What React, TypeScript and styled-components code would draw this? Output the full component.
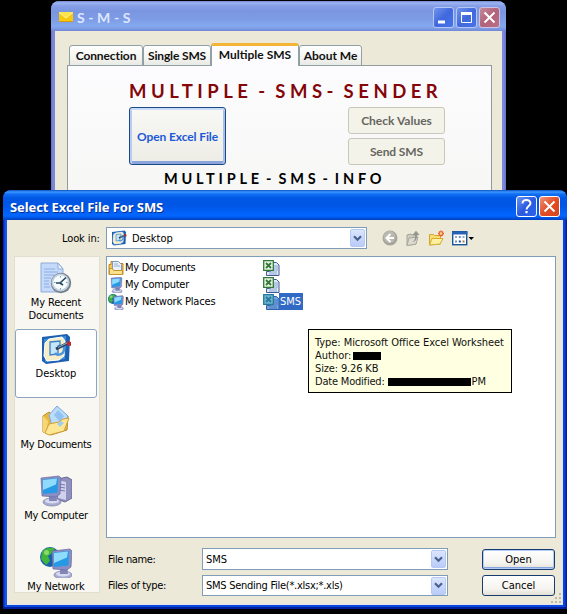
import React from "react";
import styled, { createGlobalStyle, css } from "styled-components";

const Global = createGlobalStyle`
  html, body { margin: 0; padding: 0; background: #000; overflow: hidden; }
  *, *::before, *::after { box-sizing: border-box; }
  svg { display: block; flex: none; }
  button { margin: 0; padding: 0; }
`;

const tahoma = css`
  font-family: "DejaVu Sans Condensed", "DejaVu Sans", sans-serif;
  font-stretch: condensed;
  font-size: 11px;
`;
const calibri = css`
  font-family: Lato, sans-serif;
  font-weight: 700;
`;

const Desktop = styled.div`
  position: relative;
  width: 567px;
  height: 614px;
  background: #000;
  overflow: hidden;
`;

const Text = styled.span<{ $ls?: number; $ws?: number }>`
  display: block;
  white-space: pre;
  letter-spacing: ${(p) => p.$ls ?? 0}px;
  word-spacing: ${(p) => p.$ws ?? 0}px;
`;

/* ---- main window ---- */
const MainWindow = styled.section`
  position: absolute;
  left: 51px;
  top: 1px;
  width: 455px;
  height: 210px;
  padding: 0 4px;
  border-radius: 8px 8px 0 0;
  background: linear-gradient(90deg, #6674cc 0, #8490dc 3px, #7280d4 4px, #7280d4 451px, #8490dc 452px, #6570c8 455px);
`;

const MainTitle = styled.header`
  display: flex;
  align-items: center;
  height: 30px;
  margin: 0 -4px;
  padding: 2px 6px 0 8px;
  border-radius: 8px 8px 0 0;
  background: linear-gradient(#7286cf 0, #9db5f2 2px, #859de6 5px, #7b96e1 10px, #7e9be6 18px, #84a9ee 25px, #809fe8 27px, #6f88d8 30px);
  color: #dce6fc;
  ${calibri}
  font-size: 14px;
`;

const TitleText = styled(Text)`
  flex: 1;
  margin-left: 4px;
`;

const CaptionButtons = styled.div`
  display: flex;
  gap: 2px;
`;

const CaptionButton = styled.button<{ $bg: string; $edge: string }>`
  display: grid;
  place-items: center;
  width: 21px;
  height: 21px;
  border: 1px solid ${(p) => p.$edge};
  border-radius: 3px;
  background: ${(p) => p.$bg};
`;

const MainBody = styled.div`
  height: 180px;
  padding: 12px 10px 0 12px;
  background: #ece9d8;
`;

const Tabs = styled.nav`
  display: flex;
  align-items: flex-end;
  height: 23px;
  padding-left: 2px;
  margin-bottom: -1px;
  ${calibri}
  font-size: 12px;
  color: #111;
`;

const Tab = styled.div<{ $w: number; $active?: boolean }>`
  position: relative;
  display: flex;
  justify-content: center;
  width: ${(p) => p.$w}px;
  height: ${(p) => (p.$active ? 23 : 21)}px;
  border: 1px solid #91a0a4;
  border-radius: 3px 3px 0 0;
  background: linear-gradient(#fff, #f4f4f0 60%, #e9e9e4);
  line-height: 20px;
  ${(p) =>
    p.$active &&
    css`
      border-top: 3px solid #f4b536;
      border-bottom: 0;
      background: #fcfcfe;
      line-height: 17px;
    `}
`;

const TabPanel = styled.div`
  display: flex;
  flex-direction: column;
  height: 150px;
  border: 1px solid #919b9c;
  background: linear-gradient(#fcfcfe, #f6f6f4);
`;

const Heading = styled.h1`
  margin: 14px 0 0 61px;
  height: 27px;
  line-height: 22px;
  ${calibri}
  font-size: 18.5px;
  color: #84060a;
`;

const ActionRow = styled.div`
  display: flex;
  justify-content: space-between;
  padding: 0 46px 0 61px;
`;

const Stack = styled.div`
  display: flex;
  flex-direction: column;
  gap: 4px;
`;

const DisabledButton = styled.button`
  display: flex;
  align-items: center;
  justify-content: center;
  width: 97px;
  height: 27px;
  border: 1px solid #c9c7ba;
  border-radius: 3px;
  background: #f4f3ea;
  ${calibri}
  font-size: 12px;
  color: #66665f;
`;

const OpenExcelButton = styled(DisabledButton)`
  height: 58px;
  border-color: #1c4a86;
  background: linear-gradient(#f8f8f5, #edece5);
  box-shadow: inset 0 2px 0 #cbdcf8, inset 2px 0 0 #b8cbf0, inset -2px 0 0 #a9bdea, inset 0 -3px 0 #8ba5dc;
  color: #1c58d8;
`;

const InfoHeading = styled.h2`
  margin: 5px 0 0 96px;
  line-height: 18px;
  ${calibri}
  font-size: 14.5px;
  color: #000;
`;

/* ---- file dialog ---- */
const Dialog = styled.section`
  position: absolute;
  left: 3px;
  top: 190px;
  width: 564px;
  height: 419px;
  padding: 0 4px 4px;
  border-radius: 8px 8px 0 0;
  background: linear-gradient(90deg, #0019b4 0, #0831d9 1px, #1663f0 3px, #0b48dc 4px, #0b48dc 560px, #0a3cd0 562px, #00138c 564px);
  box-shadow: inset 0 -2px 0 #001ea0;
`;

const DialogTitle = styled.header`
  display: flex;
  align-items: center;
  height: 30px;
  margin: 0 -4px;
  padding: 3px 7px 0 3px;
  border-radius: 8px 8px 0 0;
  background: linear-gradient(#0a4fc4 0, #3c97ff 2px, #1270f4 4px, #0058e4 8px, #0055e5 15px, #0262fa 23px, #0267ff 26px, #0050dc 28px, #0040c0 30px);
  font-family: "Noto Sans", sans-serif;
  font-weight: 700;
  font-size: 13px;
  color: #fff;
  text-shadow: 1px 1px 0 #0a2f8c;
`;

const DialogBody = styled.div`
  display: flex;
  flex-direction: column;
  height: 385px;
  background: #ece9d8;
  border-right: 1px solid #d8e4f8;
  border-bottom: 1px solid #dfe6f2;
  ${tahoma}
  color: #000;
`;

const LookInRow = styled.div`
  display: flex;
  align-items: center;
  height: 22px;
  margin-top: 7px;
`;

const LookInLabel = styled.div`
  width: 99px;
  padding-left: 55px;
`;

const Combo = styled.div<{ $w: number; $h?: number; $pad?: number }>`
  display: flex;
  align-items: center;
  width: ${(p) => p.$w}px;
  height: ${(p) => p.$h ?? 22}px;
  padding: 1px 1px 1px ${(p) => p.$pad ?? 3}px;
  border: 1px solid #7f9db9;
  background: #fff;
`;

const ComboValue = styled.div`
  display: flex;
  flex: 1;
  align-items: center;
  gap: 5px;
`;

const DropButton = styled.button`
  display: grid;
  place-items: center;
  width: 15px;
  height: 18px;
  border: 1px solid #b6c8f4;
  border-radius: 2px;
  background: linear-gradient(#dbe5fe, #b9cbf8);
`;

const ToolIcons = styled.div`
  display: flex;
  align-items: center;
  padding-left: 15px;
  gap: 7px;
`;

const Middle = styled.div`
  display: flex;
  height: 349px;
  margin-top: 7px;
  padding-left: 7px;
`;

const Places = styled.aside`
  width: 86px;
  height: 337px;
  margin-right: 6px;
  padding: 1px 2px 0 0;
  border: 1px solid #e2dfd0;
  background: #f8f7f1;
  overflow: hidden;
`;

const Place = styled.div<{ $selected?: boolean }>`
  display: flex;
  flex-direction: column;
  align-items: center;
  height: 69px;
  margin-bottom: 2px;
  padding-top: 3px;
  border: 1px solid transparent;
  border-radius: 3px;
  line-height: 13px;
  text-align: center;
  ${(p) =>
    p.$selected &&
    css`
      border-color: #8ea6bd;
      background: #fff;
    `}
  svg { margin-bottom: 2px; }
`;

const FilePane = styled.div`
  width: 450px;
`;

const FileList = styled.div`
  display: grid;
  grid-template-columns: 155px 1fr;
  grid-auto-rows: 17px;
  align-content: start;
  height: 282px;
  padding: 2px 0 0 1px;
  border: 1px solid #7f9db9;
  background: #fff;
`;

const FileItem = styled.div`
  display: flex;
  align-items: center;
`;

const FileLabel = styled(Text)<{ $selected?: boolean }>`
  height: 17px;
  padding: 0 1px;
  line-height: 18px;
  ${(p) => p.$selected && "margin-left: -1px; padding: 0 2px 0 1px; background: #316ac5; color: #fff;"}
`;

const Form = styled.div`
  display: grid;
  grid-template-columns: 94px 280px 73px;
  grid-template-rows: 22px 21px;
  row-gap: 5px;
  align-items: center;
  padding: 0 0 0 2px;
  margin-top: 10px;
`;

const PushButton = styled.button<{ $primary?: boolean }>`
  display: flex;
  justify-content: center;
  align-items: center;
  width: 73px;
  height: 21px;
  border: 1px solid #173c70;
  border-radius: 3px;
  background: linear-gradient(#fff, #f4f3ee 70%, #e2dfd5);
  ${tahoma}
  color: #000;
  ${(p) => p.$primary && "box-shadow: inset 0 0 0 1px #b4cbf4, inset 0 -2px 0 #8aa6e0;"}
`;

const Grip = styled.div`
  position: absolute;
  right: 5px;
  bottom: 5px;
`;

const Tooltip = styled.div`
  position: absolute;
  left: 308px;
  top: 329px;
  width: 204px;
  height: 64px;
  padding: 6px 0 0 6px;
  border: 1px solid #000;
  background: #ffffe1;
  ${tahoma}
  line-height: 13px;
  color: #111;
`;

const TipLine = styled.div`
  display: flex;
  align-items: center;
  height: 13px;
`;

const Redaction = styled.i<{ $w: number; $ml: number }>`
  width: ${(p) => p.$w}px;
  height: 8px;
  margin: 0 1px 0 ${(p) => p.$ml}px;
  background: #000;
`;

/* ---- icons ---- */
const Mail = () => (
  <svg width="14" height="10" viewBox="0 0 14 10">
    <rect width="14" height="10" rx="1" fill="#f6c90e" />
    <path d="M0 0h14L7 6z" fill="#ffe44a" />
    <path d="M0 .5 7 6l7-5.500" fill="none" stroke="#fff3a0" />
    <path d="M0 9.500h14" stroke="#d49c12" />
  </svg>
);
const Cross = () => (
  <svg width="13" height="13" viewBox="0 0 13 13">
    <path d="M1.500 1.500l10 10M11.500 1.500l-10 10" stroke="#fff" strokeWidth="2" />
  </svg>
);
const Chevron = () => (
  <svg width="9" height="7" viewBox="0 0 9 7">
    <path d="M1 1.300l3.500 3.500L8 1.300" fill="none" stroke="#4a608e" strokeWidth="2.200" />
  </svg>
);

const DesktopIcon = ({ size }: { size: number }) => (
  <svg width={size} height={size} viewBox="0 0 32 32">
    <path d="M2 4 27 1l3 3-1 24-23 3-4-3z" fill="#1e5fb0" />
    <path d="M4 6 26 3l-1 23-20 3z" fill="#3f90dc" />
    <path d="M9 6l13-2 3 4-1 15-5 4-12 1-3-5 1-13z" fill="#f7edc6" stroke="#fff" />
    <path d="M10 9l10-1v4l-2 1v8l-8 1z" fill="#c5e5fb" stroke="#3b80c6" strokeWidth="1.300" />
    <path d="M15 20c2 3 9 2 9-4v-3" fill="none" stroke="#4b95df" strokeWidth="2.500" />
    <path d="M16 16 28 10" stroke="#28405c" strokeWidth="3" />
    <path d="M18 14.500 27 10" stroke="#89b6d5" strokeWidth="1" />
    <path d="M27 8l4 1v4l-4-1z" fill="#c02a2c" />
  </svg>
);
const RecentIcon = () => (
  <svg width="32" height="32" viewBox="0 0 32 32">
    <path d="M1 1h17l5 6v23H1z" fill="#c5dafa" stroke="#8eabd8" />
    <path d="M18 1v6h5z" fill="#f1f6fe" stroke="#8eabd8" />
    <path d="M4 7h11M4 10h14M4 13h10M4 16h7M4 19h5M4 22h5M4 25h6" stroke="#8caee2" />
    <circle cx="21" cy="21" r="10.200" fill="#737f8c" />
    <circle cx="20.500" cy="20.500" r="9" fill="#c3d0dc" />
    <circle cx="20.500" cy="20.500" r="7.200" fill="#f6fbfd" />
    <path d="M26 15.500 20 21h-4M20 21l3 2" fill="none" stroke="#26465a" strokeWidth="1.600" />
    <path d="M20.500 14v1.500M20.500 26v1.500M14 20.500h1.500M26 20.500h1.500" stroke="#5ba2be" />
  </svg>
);
const DocsIcon = () => (
  <svg width="32" height="32" viewBox="0 0 32 32">
    <path d="M3 12l6-4 5 4h14l-1 14-16 5-8-3z" fill="#e9b93e" stroke="#b98a28" />
    <path d="M9 11 17 2l11 10-6 12-10-2z" fill="#bcdcfb" stroke="#7aa6d6" />
    <path d="M14 11l4-5 6 6-4 6z" fill="#91c3f2" />
    <path d="M3 12l5 5-2 13-3-2z" fill="#f7d775" />
    <path d="M9 20l10-2 4-3 6-1-5 13-15 4-4-2z" fill="#fde694" stroke="#cfa23c" />
    <path d="M17 20l4-3 3 2-4 4z" fill="#9fcdee" />
  </svg>
);
const Monitor = ({ x = 0, y = 0 }: { x?: number; y?: number }) => (
  <g transform={`translate(${x} ${y})`}>
    <ellipse cx="12" cy="26" rx="9" ry="4" fill="#a8acd0" stroke="#777ba8" strokeWidth=".7" />
    <ellipse cx="12" cy="25" rx="7" ry="2.500" fill="#d8daf0" />
    <path d="M9 18l7-1 1 8H9z" fill="#8285b5" />
    <path d="M1 2 19 0l2 2-1 16-4 3-14-1z" fill="#8b8ec4" stroke="#686ba0" strokeWidth=".7" />
    <path d="M2.500 3.500 18 2l-.5 14.500L3 18z" fill="#2699e4" />
    <path d="M3 4 17 2.500l-1 6L3 14z" fill="#8edbfd" />
  </g>
);
const ComputerIcon = () => (
  <svg width="32" height="32" viewBox="0 0 32 32">
    <path d="M18 4l9-2 5 3v18l-7 4-8-3z" fill="#8e91bd" stroke="#666a98" />
    <path d="M18 5l8 2v18l-8-2z" fill="#cfd1ed" />
    <path d="M19 9l6 1M19 12l6 1M19 15l6 1" stroke="#7478a9" />
    <Monitor x={0} y={1} />
  </svg>
);
const Globe = ({ r, cx, cy }: { r: number; cx: number; cy: number }) => (
  <g transform={`translate(${cx} ${cy}) scale(${r})`}>
    <circle r="1" fill="#1763aa" />
    <path d="M-.8-.5C-.5-1 .3-1 .5-.8L.1-.3-.2-.1 0 .4-.4.8-.9.2z" fill="#42b43b" />
    <path d="M.3-.2.9-.4 1 .3.5.7z" fill="#258e3b" />
    <circle cx="-.35" cy="-.45" r=".25" fill="#a1e27c" opacity=".8" />
  </g>
);
const NetworkIcon = () => (
  <svg width="32" height="32" viewBox="0 0 32 32">
    <Globe r={10} cx={10} cy={11} />
    <Monitor x={11} y={3} />
  </svg>
);
const FolderDocsSmall = () => (
  <svg width="16" height="16" viewBox="0 0 16 16">
    <path d="M1 4.500h2v-3h5l1 2h6v11H1z" fill="#f4c84c" stroke="#b98820" />
    <path d="M4.500 1.500h6l3 3v7h-9z" fill="#e9f1fc" stroke="#8296b8" />
    <path d="M6 4h4M6 6h6" stroke="#97aed2" />
    <path d="M1.500 8.500h3l1 2h9v4h-13z" fill="#fbe28a" stroke="#c2942c" />
  </svg>
);
const ComputerSmall = () => (
  <svg width="16" height="16" viewBox="0 0 32 32">
    <g transform="translate(5 0) scale(1.1)"><Monitor /></g>
  </svg>
);
const NetworkSmall = () => (
  <svg width="16" height="16" viewBox="0 0 32 32">
    <Globe r={10} cx={10} cy={10} />
    <Monitor x={10} y={3} />
  </svg>
);
const ExcelIcon = ({ selected }: { selected?: boolean }) => {
  const green = selected ? "#287a9c" : "#33783a";
  return (
    <svg width="17" height="16" viewBox="0 0 17 16">
      <path d="M7.500 2.500h6l2.500 2.500v10.500H3.500v-4h4z" fill={selected ? "#78a5dc" : "#dfe9fa"} stroke={selected ? "#345ea8" : "#435c95"} />
      <path d="M11 6h4M11 8h4M11 10h4M6 12h8M6 14h8" stroke={selected ? "#477bc0" : "#8ca7cf"} />
      <path d="M.7.700h9.600v9.600H.7z" fill={selected ? "#6eb6d2" : "#e6f5df"} stroke={green} strokeWidth="1.300" />
      <path d="M3 3l5 5M8 3 3 8" stroke={green} strokeWidth="1.800" />
    </svg>
  );
};
const BackIcon = () => (
  <svg width="16" height="16" viewBox="0 0 16 16">
    <circle cx="8" cy="8" r="7.500" fill="#a5a49c" />
    <circle cx="7.500" cy="7" r="6" fill="#bab9b1" />
    <path d="M12 8H5M8.500 4 4.500 8l4 4" fill="none" stroke="#fff" strokeWidth="2" />
  </svg>
);
const UpIcon = () => (
  <svg width="16" height="16" viewBox="0 0 16 16">
    <path d="M2 5l4-1 1 1h5l-1 9-9 1.500z" fill="#cfcdc2" stroke="#a5a399" />
    <path d="M4 8l9-1-2 7-9 1.500z" fill="#dddbd1" stroke="#aaa89e" />
    <path d="M7 12c3-1 3-3 3-7H7.500L11 .8 14.500 5H12c0 4-1 7-5 7z" fill="#96958e" />
  </svg>
);
const NewFolderIcon = () => (
  <svg width="17" height="16" viewBox="0 0 17 16">
    <path d="M1.500 4.500h4l1 1h6V14l-11 1z" fill="#f9dc70" stroke="#d3a72c" />
    <path d="M4 8.500h11L12 14l-10.500 1z" fill="#fdf0a0" stroke="#d8ad34" />
    <path d="M13 .500v6M10 3.500h6M11 1.500l4 4M15 1.500l-4 4" stroke="#e8602a" strokeWidth="1.400" />
    <circle cx="13" cy="3.500" r="1.300" fill="#ffd9a0" />
  </svg>
);
const ViewsIcon = () => (
  <svg width="23" height="15" viewBox="0 0 23 15">
    <rect x=".7" y=".7" width="14" height="13" fill="#fff" stroke="#1a5598" strokeWidth="1.400" />
    <path d="M0 2h15.400" stroke="#2763b4" strokeWidth="3" />
    <path d="M3 5h2v2H3zM10.500 5h2v2h-2z" fill="#93a8be" />
    <path d="M6.800 5h2v2h-2zM3 9.500h2v2H3z" fill="#6f93ba" />
    <path d="M6.800 9.500h2v2h-2z" fill="#1b49a2" />
    <path d="M10.500 9.500h2v2h-2z" fill="#a57d45" />
    <path d="M16.500 6H22l-2.750 3z" fill="#000" />
  </svg>
);

const App = () => (
  <Desktop>
    <Global />
    <MainWindow>
      <MainTitle>
        <Mail />
        <TitleText $ls={1} $ws={-1.8}>S - M - S</TitleText>
        <CaptionButtons>
          <CaptionButton $bg="linear-gradient(135deg,#7295ec,#4068de 50%,#4874e8)" $edge="#b5c7f3">
            <svg width="13" height="13"><path d="M1 11h7" stroke="#fff" strokeWidth="3" /></svg>
          </CaptionButton>
          <CaptionButton $bg="linear-gradient(135deg,#7295ec,#4068de 50%,#4874e8)" $edge="#b5c7f3">
            <svg width="13" height="13"><path d="M1.500 2v9.500h10V2" fill="none" stroke="#fff" /><path d="M1 2.500h11" stroke="#fff" strokeWidth="3" /></svg>
          </CaptionButton>
          <CaptionButton $bg="linear-gradient(135deg,#c38a9a,#b0637c 50%,#b96f83)" $edge="#d0c2e2">
            <Cross />
          </CaptionButton>
        </CaptionButtons>
      </MainTitle>
      <MainBody>
        <Tabs>
          <Tab $w={74}><Text $ls={-0.1}>Connection</Text></Tab>
          <Tab $w={68}><Text $ls={-0.15}>Single SMS</Text></Tab>
          <Tab $w={88} $active><Text $ls={0}>Multiple SMS</Text></Tab>
          <Tab $w={63}><Text $ls={0}>About Me</Text></Tab>
        </Tabs>
        <TabPanel>
          <Heading><Text $ls={4.5} $ws={-3.3}>MULTIPLE - SMS- SENDER</Text></Heading>
          <ActionRow>
            <OpenExcelButton><Text $ls={-0.1}>Open Excel File</Text></OpenExcelButton>
            <Stack>
              <DisabledButton><Text $ls={0}>Check Values</Text></DisabledButton>
              <DisabledButton><Text $ls={-0.1}>Send SMS</Text></DisabledButton>
            </Stack>
          </ActionRow>
          <InfoHeading><Text $ls={3.8} $ws={-4.2}>MULTIPLE - SMS - INFO</Text></InfoHeading>
        </TabPanel>
      </MainBody>
    </MainWindow>

    <Dialog>
      <DialogTitle>
        <TitleText $ls={-0.1}>Select Excel File For SMS</TitleText>
        <CaptionButtons>
          <CaptionButton $bg="linear-gradient(135deg,#6b94f4,#2a5be0 50%,#2c63ea)" $edge="#fff">
            <svg width="13" height="15" viewBox="0 0 13 15">
              <path d="M2.500 4.500C2.500 0 10.500 0 10.500 4.300 10.500 7 6.500 7 6.500 10.500" fill="none" stroke="#fff" strokeWidth="2" />
              <path d="M5.400 12h2.200v2.200H5.400z" fill="#fff" />
            </svg>
          </CaptionButton>
          <CaptionButton $bg="linear-gradient(135deg,#f0937a,#e04e26 50%,#d8451c)" $edge="#fff">
            <Cross />
          </CaptionButton>
        </CaptionButtons>
      </DialogTitle>
      <DialogBody>
        <LookInRow>
          <LookInLabel><Text $ls={-0.1}>Look in:</Text></LookInLabel>
          <Combo $w={261} $pad={4}>
            <ComboValue><DesktopIcon size={16} /><Text>Desktop</Text></ComboValue>
            <DropButton><Chevron /></DropButton>
          </Combo>
          <ToolIcons><BackIcon /><UpIcon /><NewFolderIcon /><ViewsIcon /></ToolIcons>
        </LookInRow>
        <Middle>
          <Places>
            <Place><RecentIcon /><Text $ls={-0.15}>{"My Recent\nDocuments"}</Text></Place>
            <Place $selected><DesktopIcon size={32} /><Text>Desktop</Text></Place>
            <Place><DocsIcon /><Text $ls={-0.25}>My Documents</Text></Place>
            <Place><ComputerIcon /><Text $ls={-0.3}>My Computer</Text></Place>
            <Place><NetworkIcon /><Text $ls={-0.15}>My Network</Text></Place>
          </Places>
          <FilePane>
            <FileList>
              <FileItem><FolderDocsSmall /><FileLabel $ls={-0.3}>My Documents</FileLabel></FileItem>
              <FileItem><ExcelIcon /></FileItem>
              <FileItem><ComputerSmall /><FileLabel $ls={-0.25}>My Computer</FileLabel></FileItem>
              <FileItem><ExcelIcon /></FileItem>
              <FileItem><NetworkSmall /><FileLabel $ls={-0.18}>My Network Places</FileLabel></FileItem>
              <FileItem><ExcelIcon selected /><FileLabel $selected>SMS</FileLabel></FileItem>
            </FileList>
            <Form>
              <Text $ls={-0.35}>File name:</Text>
              <Combo $w={246}>
                <ComboValue><Text>SMS</Text></ComboValue>
                <DropButton><Chevron /></DropButton>
              </Combo>
              <PushButton $primary><Text>Open</Text></PushButton>
              <Text $ls={-0.35}>Files of type:</Text>
              <Combo $w={246} $h={21}>
                <ComboValue><Text $ls={-0.27}>SMS Sending File(*.xlsx;*.xls)</Text></ComboValue>
                <DropButton><Chevron /></DropButton>
              </Combo>
              <PushButton><Text>Cancel</Text></PushButton>
            </Form>
          </FilePane>
        </Middle>
      </DialogBody>
      <Grip>
        <svg width="12" height="12">
          <path d="M9 1h2v2H9zM5 5h2v2H5zM9 5h2v2H9zM1 9h2v2H1zM5 9h2v2H5zM9 9h2v2H9z" fill="#bdb9a5" />
        </svg>
      </Grip>
    </Dialog>

    <Tooltip>
      <TipLine><Text $ls={-0.06}>Type: Microsoft Office Excel Worksheet</Text></TipLine>
      <TipLine><Text>Author:</Text><Redaction $w={28} $ml={2} /></TipLine>
      <TipLine><Text $ls={-0.15}>Size: 9.26 KB</Text></TipLine>
      <TipLine><Text $ls={-0.2}>Date Modified:</Text><Redaction $w={83} $ml={3} /><Text>PM</Text></TipLine>
    </Tooltip>
  </Desktop>
);

export default App;
